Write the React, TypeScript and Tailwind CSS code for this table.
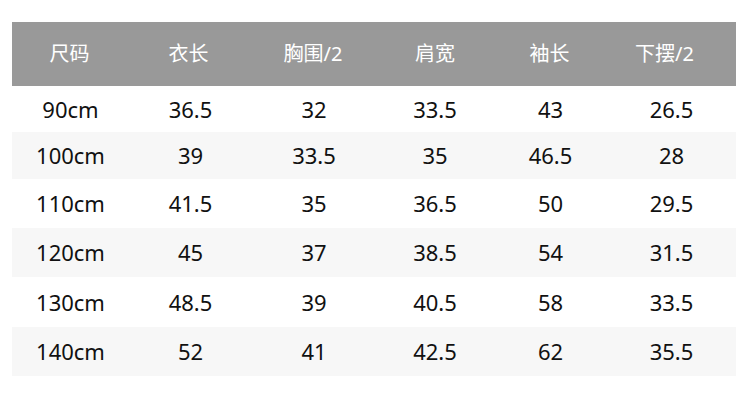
const headers = ["尺码", "衣长", "胸围/2", "肩宽", "袖长", "下摆/2"];

const rows: string[][] = [
  ["90cm", "36.5", "32", "33.5", "43", "26.5"],
  ["100cm", "39", "33.5", "35", "46.5", "28"],
  ["110cm", "41.5", "35", "36.5", "50", "29.5"],
  ["120cm", "45", "37", "38.5", "54", "31.5"],
  ["130cm", "48.5", "39", "40.5", "58", "33.5"],
  ["140cm", "52", "41", "42.5", "62", "35.5"],
];

// header labels sit a little left of the data columns in the source
const headWidths = ["w-[115px]", "w-[123px]", "w-[126px]", "w-[118px]", "w-[111px]", "w-[119px]"];
const colWidths = ["w-[117px]", "w-[123px]", "w-[124px]", "w-[118px]", "w-[113px]", "w-[129px]"];
const rowHeights = ["h-[46px]", "h-[47px]", "h-[49px]", "h-[49px]", "h-[50px]", "h-[49px]"];

export default function App() {
  return (
    <div
      className="w-[750px] h-[407px] bg-white pt-[22px] pl-[12px]"
      style={{ fontFamily: '"Noto Sans", "Noto Sans CJK SC", sans-serif' }}
    >
      <div className="w-[724px] flex flex-col">
        <div className="flex h-[64px] bg-[#999999] text-white text-[20px]">
          {headers.map((h, i) => (
            <div key={h} className={`${headWidths[i]} flex items-center justify-center`}>
              {h}
            </div>
          ))}
        </div>
        {rows.map((row, r) => (
          <div
            key={row[0]}
            className={`flex ${rowHeights[r]} ${r % 2 === 1 ? "bg-[#f7f7f7]" : "bg-white"} text-[#111111] text-[22px]`}
          >
            {row.map((cell, i) => (
              <div key={i} className={`${colWidths[i]} flex items-center justify-center`}>
                {cell}
              </div>
            ))}
          </div>
        ))}
      </div>
    </div>
  );
}
